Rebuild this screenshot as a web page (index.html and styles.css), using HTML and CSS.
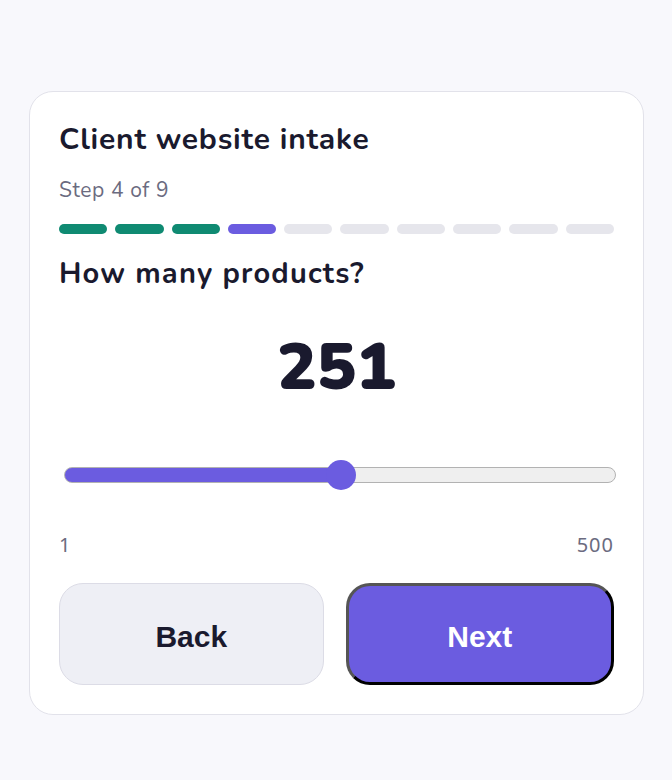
FILE: index.html
```html
<!DOCTYPE html>
<html lang="en">
<head>
    <meta charset="UTF-8">
    <meta name="viewport" content="width=device-width, initial-scale=1.0">
    <title>Client website intake</title>
    <link rel="stylesheet" href="styles.css">
</head>
<body>
    <div class="card">
        <h1 class="title">Client website intake</h1>
        <div class="step">Step 4 of 9</div>
        <div class="progress">
            <span class="seg done"></span>
            <span class="seg done"></span>
            <span class="seg done"></span>
            <span class="seg current"></span>
            <span class="seg"></span>
            <span class="seg"></span>
            <span class="seg"></span>
            <span class="seg"></span>
            <span class="seg"></span>
            <span class="seg"></span>
        </div>
        <h2 class="question">How many products?</h2>
        <div class="value" id="value">251</div>
        <div class="slider-wrap">
            <input type="range" class="slider" id="slider" min="1" max="500" value="251">
        </div>
        <div class="range-labels">
            <span>1</span>
            <span>500</span>
        </div>
        <div class="actions">
            <button class="btn back">Back</button>
            <button class="btn next">Next</button>
        </div>
    </div>
    <script>
        var slider = document.getElementById('slider');
        function paint(){
            var pct = (slider.value - slider.min) / (slider.max - slider.min) * 100;
            slider.style.setProperty('--fill', pct + '%');
            document.getElementById('value').textContent = slider.value;
        }
        slider.addEventListener('input', paint);
        paint();
    </script>
</body>
</html>
```

FILE: styles.css
```css
body{
    margin: 0;
    background-color: #f8f8fc;
    font-family: "Nunito", Lato, "Noto Sans", sans-serif;
    color: #1a1a2e;
}
.card{
    margin: 91px 28px 0 29px;
    background: #ffffff;
    border: 1px solid #e2e2ea;
    border-radius: 24px;
    padding: 31px 29px 29px 29px;
}
.title{
    margin: 0;
    font-size: 30px;
    line-height: 34px;
    font-weight: 700;
    letter-spacing: 0.8px;
}
.step{
    margin-top: 21px;
    font-size: 21px;
    line-height: 24px;
    letter-spacing: 0.6px;
    color: #6b6b80;
}
.progress{
    display: flex;
    gap: 8px;
    margin-top: 22px;
}
.seg{
    flex: 1;
    height: 10px;
    border-radius: 5px;
    background: #e6e6ec;
}
.seg.done{
    background: #0f8a72;
}
.seg.current{
    background: #6b5ce0;
}
.question{
    margin: 23px 0 0 0;
    font-size: 29px;
    line-height: 34px;
    font-weight: 700;
    letter-spacing: 1.2px;
}
.value{
    margin-top: 38px;
    text-align: center;
    font-size: 66px;
    line-height: 76px;
    font-weight: 900;
}
.slider-wrap{
    margin: 55px -2px 0 0;
    padding: 0 0 0 5px;
}
.slider{
    -webkit-appearance: none;
    appearance: none;
    display: block;
    width: 100%;
    height: 30px;
    margin: 0;
    background: transparent;
    cursor: pointer;
}
.slider::-webkit-slider-runnable-track{
    height: 16px;
    border-radius: 8px;
    border: 1px solid #b2b2b2;
    box-sizing: border-box;
    background: linear-gradient(to right, #6b5ce0 var(--fill), #efefef var(--fill));
}
.slider::-webkit-slider-thumb{
    -webkit-appearance: none;
    width: 30px;
    height: 30px;
    margin-top: -8px;
    border-radius: 50%;
    background: #6b5ce0;
    border: none;
}
.range-labels{
    display: flex;
    justify-content: space-between;
    margin-top: 44px;
    font-family: "Noto Sans", sans-serif;
    font-size: 20px;
    line-height: 22px;
    letter-spacing: 1px;
    color: #6b6b80;
}
.actions{
    display: flex;
    gap: 22px;
    margin-top: 27px;
}
.btn{
    flex: 1;
    height: 102px;
    padding-top: 6px;
    border-radius: 24px;
    font-family: "Liberation Sans", Arial, sans-serif;
    font-size: 30px;
    font-weight: 700;
    cursor: pointer;
}
.back{
    background: #eeeff5;
    border: 1px solid #dcdce6;
    color: #1a1a2e;
}
.next{
    background: #6b5ce0;
    border: 3px solid;
    border-color: #555555 #000000 #000000 #555555;
    color: #ffffff;
}
```
